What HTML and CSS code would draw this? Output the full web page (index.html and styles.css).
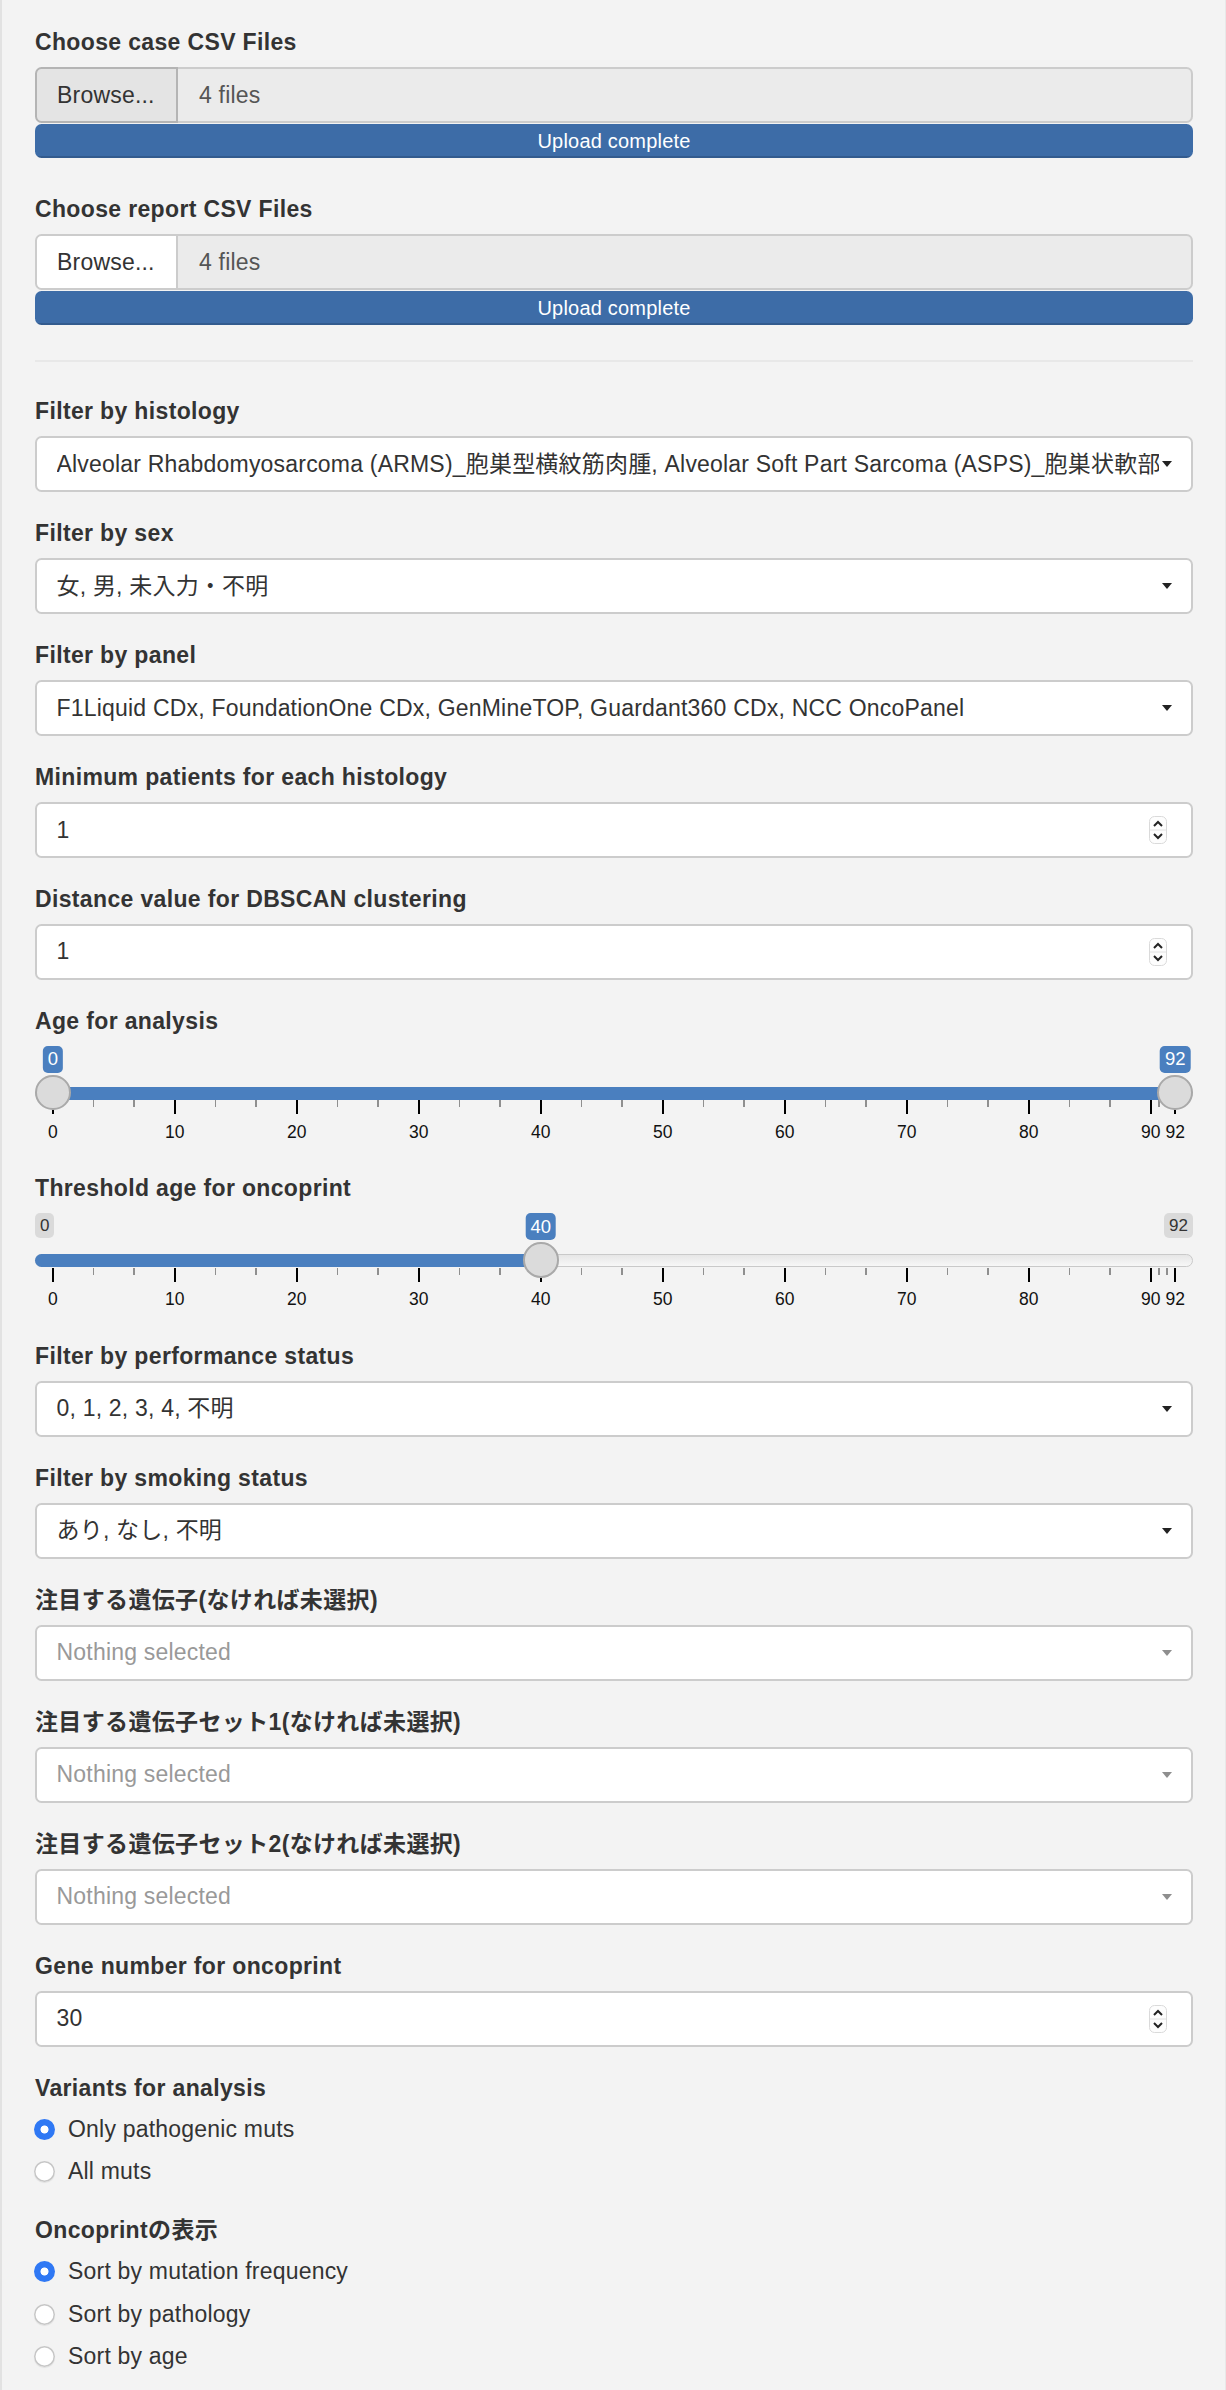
FILE: index.html
```html
<!DOCTYPE html>
<html lang="ja">
<head>
<meta charset="utf-8">
<title>Filters</title>
<link rel="stylesheet" href="styles.css">
</head>
<body>
<div class="well">

  <div class="group file-group">
    <label class="ctl-label">Choose case CSV Files</label>
    <div class="input-group">
      <span class="browse pressed">Browse...</span>
      <span class="file-name">4 files</span>
    </div>
    <div class="progress"><div class="progress-bar">Upload complete</div></div>
  </div>

  <div class="group file-group">
    <label class="ctl-label">Choose report CSV Files</label>
    <div class="input-group">
      <span class="browse">Browse...</span>
      <span class="file-name">4 files</span>
    </div>
    <div class="progress"><div class="progress-bar">Upload complete</div></div>
  </div>

  <hr class="divider">

  <div class="group">
    <label class="ctl-label">Filter by histology</label>
    <div class="select"><span class="sel-text">Alveolar Rhabdomyosarcoma (ARMS)_胞巣型横紋筋肉腫, Alveolar Soft Part Sarcoma (ASPS)_胞巣状軟部肉腫, Angiosarcoma_血管肉腫</span><span class="caret"></span></div>
  </div>

  <div class="group">
    <label class="ctl-label">Filter by sex</label>
    <div class="select"><span class="sel-text">女, 男, 未入力・不明</span><span class="caret"></span></div>
  </div>

  <div class="group">
    <label class="ctl-label">Filter by panel</label>
    <div class="select"><span class="sel-text">F1Liquid CDx, FoundationOne CDx, GenMineTOP, Guardant360 CDx, NCC OncoPanel</span><span class="caret"></span></div>
  </div>

  <div class="group">
    <label class="ctl-label">Minimum patients for each histology</label>
    <div class="number"><span class="num-text">1</span>
      <svg class="spin" width="18" height="28" viewBox="0 0 18 28"><rect x="0.5" y="0.5" width="17" height="27" rx="5" fill="#fdfdfd" stroke="#dadada"/><line x1="1" y1="14" x2="17" y2="14" stroke="#e2e2e2"/><path d="M5 10 L9 6 L13 10" fill="none" stroke="#222" stroke-width="2"/><path d="M5 18 L9 22 L13 18" fill="none" stroke="#222" stroke-width="2"/></svg>
    </div>
  </div>

  <div class="group">
    <label class="ctl-label">Distance value for DBSCAN clustering</label>
    <div class="number"><span class="num-text">1</span>
      <svg class="spin" width="18" height="28" viewBox="0 0 18 28"><rect x="0.5" y="0.5" width="17" height="27" rx="5" fill="#fdfdfd" stroke="#dadada"/><line x1="1" y1="14" x2="17" y2="14" stroke="#e2e2e2"/><path d="M5 10 L9 6 L13 10" fill="none" stroke="#222" stroke-width="2"/><path d="M5 18 L9 22 L13 18" fill="none" stroke="#222" stroke-width="2"/></svg>
    </div>
  </div>

  <div class="group slider-group">
    <label class="ctl-label">Age for analysis</label>
    <div class="irs">
      <span class="irs-line"></span>
      <span class="irs-bar" style="--from:0;--to:1"></span>
      <div class="irs-grid">
        <span class="tick" style="--p:0"></span>
        <span class="tick small" style="--p:0.036232"></span>
        <span class="tick small" style="--p:0.072464"></span>
        <span class="tick" style="--p:0.108696"></span>
        <span class="tick small" style="--p:0.144928"></span>
        <span class="tick small" style="--p:0.181159"></span>
        <span class="tick" style="--p:0.217391"></span>
        <span class="tick small" style="--p:0.253623"></span>
        <span class="tick small" style="--p:0.289855"></span>
        <span class="tick" style="--p:0.326087"></span>
        <span class="tick small" style="--p:0.362319"></span>
        <span class="tick small" style="--p:0.398551"></span>
        <span class="tick" style="--p:0.434783"></span>
        <span class="tick small" style="--p:0.471014"></span>
        <span class="tick small" style="--p:0.507246"></span>
        <span class="tick" style="--p:0.543478"></span>
        <span class="tick small" style="--p:0.579710"></span>
        <span class="tick small" style="--p:0.615942"></span>
        <span class="tick" style="--p:0.652174"></span>
        <span class="tick small" style="--p:0.688406"></span>
        <span class="tick small" style="--p:0.724638"></span>
        <span class="tick" style="--p:0.760870"></span>
        <span class="tick small" style="--p:0.797101"></span>
        <span class="tick small" style="--p:0.833333"></span>
        <span class="tick" style="--p:0.869565"></span>
        <span class="tick small" style="--p:0.905797"></span>
        <span class="tick small" style="--p:0.942029"></span>
        <span class="tick" style="--p:0.978261"></span>
        <span class="tick small" style="--p:0.985507"></span>
        <span class="tick small" style="--p:0.992754"></span>
        <span class="tick" style="--p:1"></span>
        <span class="grid-text" style="--p:0">0</span>
        <span class="grid-text" style="--p:0.108696">10</span>
        <span class="grid-text" style="--p:0.217391">20</span>
        <span class="grid-text" style="--p:0.326087">30</span>
        <span class="grid-text" style="--p:0.434783">40</span>
        <span class="grid-text" style="--p:0.543478">50</span>
        <span class="grid-text" style="--p:0.652174">60</span>
        <span class="grid-text" style="--p:0.760870">70</span>
        <span class="grid-text" style="--p:0.869565">80</span>
        <span class="grid-text" style="--p:0.978261">90</span>
        <span class="grid-text" style="--p:1">92</span>
      </div>
      <span class="irs-val" style="--p:0">0</span>
      <span class="irs-val" style="--p:1">92</span>
      <span class="irs-handle" style="--p:0"></span>
      <span class="irs-handle" style="--p:1"></span>
    </div>
  </div>

  <div class="group slider-group">
    <label class="ctl-label">Threshold age for oncoprint</label>
    <div class="irs">
      <span class="irs-line"></span>
      <span class="irs-bar single" style="--to:0.434783"></span>
      <div class="irs-grid">
        <span class="tick" style="--p:0"></span>
        <span class="tick small" style="--p:0.036232"></span>
        <span class="tick small" style="--p:0.072464"></span>
        <span class="tick" style="--p:0.108696"></span>
        <span class="tick small" style="--p:0.144928"></span>
        <span class="tick small" style="--p:0.181159"></span>
        <span class="tick" style="--p:0.217391"></span>
        <span class="tick small" style="--p:0.253623"></span>
        <span class="tick small" style="--p:0.289855"></span>
        <span class="tick" style="--p:0.326087"></span>
        <span class="tick small" style="--p:0.362319"></span>
        <span class="tick small" style="--p:0.398551"></span>
        <span class="tick" style="--p:0.434783"></span>
        <span class="tick small" style="--p:0.471014"></span>
        <span class="tick small" style="--p:0.507246"></span>
        <span class="tick" style="--p:0.543478"></span>
        <span class="tick small" style="--p:0.579710"></span>
        <span class="tick small" style="--p:0.615942"></span>
        <span class="tick" style="--p:0.652174"></span>
        <span class="tick small" style="--p:0.688406"></span>
        <span class="tick small" style="--p:0.724638"></span>
        <span class="tick" style="--p:0.760870"></span>
        <span class="tick small" style="--p:0.797101"></span>
        <span class="tick small" style="--p:0.833333"></span>
        <span class="tick" style="--p:0.869565"></span>
        <span class="tick small" style="--p:0.905797"></span>
        <span class="tick small" style="--p:0.942029"></span>
        <span class="tick" style="--p:0.978261"></span>
        <span class="tick small" style="--p:0.985507"></span>
        <span class="tick small" style="--p:0.992754"></span>
        <span class="tick" style="--p:1"></span>
        <span class="grid-text" style="--p:0">0</span>
        <span class="grid-text" style="--p:0.108696">10</span>
        <span class="grid-text" style="--p:0.217391">20</span>
        <span class="grid-text" style="--p:0.326087">30</span>
        <span class="grid-text" style="--p:0.434783">40</span>
        <span class="grid-text" style="--p:0.543478">50</span>
        <span class="grid-text" style="--p:0.652174">60</span>
        <span class="grid-text" style="--p:0.760870">70</span>
        <span class="grid-text" style="--p:0.869565">80</span>
        <span class="grid-text" style="--p:0.978261">90</span>
        <span class="grid-text" style="--p:1">92</span>
      </div>
      <span class="irs-min">0</span>
      <span class="irs-max">92</span>
      <span class="irs-val" style="--p:0.434783">40</span>
      <span class="irs-handle" style="--p:0.434783"></span>
    </div>
  </div>

  <div class="group">
    <label class="ctl-label">Filter by performance status</label>
    <div class="select"><span class="sel-text">0, 1, 2, 3, 4, 不明</span><span class="caret"></span></div>
  </div>

  <div class="group">
    <label class="ctl-label">Filter by smoking status</label>
    <div class="select"><span class="sel-text">あり, なし, 不明</span><span class="caret"></span></div>
  </div>

  <div class="group">
    <label class="ctl-label">注目する遺伝子(なければ未選択)</label>
    <div class="select placeholder"><span class="sel-text">Nothing selected</span><span class="caret"></span></div>
  </div>

  <div class="group">
    <label class="ctl-label">注目する遺伝子セット1(なければ未選択)</label>
    <div class="select placeholder"><span class="sel-text">Nothing selected</span><span class="caret"></span></div>
  </div>

  <div class="group">
    <label class="ctl-label">注目する遺伝子セット2(なければ未選択)</label>
    <div class="select placeholder"><span class="sel-text">Nothing selected</span><span class="caret"></span></div>
  </div>

  <div class="group">
    <label class="ctl-label">Gene number for oncoprint</label>
    <div class="number"><span class="num-text">30</span>
      <svg class="spin" width="18" height="28" viewBox="0 0 18 28"><rect x="0.5" y="0.5" width="17" height="27" rx="5" fill="#fdfdfd" stroke="#dadada"/><line x1="1" y1="14" x2="17" y2="14" stroke="#e2e2e2"/><path d="M5 10 L9 6 L13 10" fill="none" stroke="#222" stroke-width="2"/><path d="M5 18 L9 22 L13 18" fill="none" stroke="#222" stroke-width="2"/></svg>
    </div>
  </div>

  <div class="group radio-group">
    <label class="ctl-label">Variants for analysis</label>
    <div class="radio checked"><span class="dot"></span><span>Only pathogenic muts</span></div>
    <div class="radio"><span class="dot"></span><span>All muts</span></div>
  </div>

  <div class="group radio-group">
    <label class="ctl-label">Oncoprintの表示</label>
    <div class="radio checked"><span class="dot"></span><span>Sort by mutation frequency</span></div>
    <div class="radio"><span class="dot"></span><span>Sort by pathology</span></div>
    <div class="radio"><span class="dot"></span><span>Sort by age</span></div>
  </div>

</div>
</body>
</html>
```

FILE: styles.css
```css
* { box-sizing: border-box; }

html, body {
  margin: 0;
  padding: 0;
}

body {
  background: #f3f3f3;
  font-family: "Liberation Sans", Arial, "Noto Sans CJK JP", sans-serif;
  font-size: 23px;
  line-height: 32.8px;
  letter-spacing: 0.2px;
  color: #333;
}

.well {
  min-height: 2390px;
  background: #f3f3f3;
  border-left: 2px solid #e2e2e2;
  border-right: 1px solid #e8e8e8;
  padding: 26px 32px 1px 33px;
}

.ctl-label {
  display: block;
  font-weight: bold;
  letter-spacing: 0.35px;
  height: 32.8px;
  margin-bottom: 8.2px;
  white-space: nowrap;
}

.group {
  margin-bottom: 25px;
}

/* file input */
.file-group {
  margin-bottom: 35px;
}

.input-group {
  display: flex;
  height: 56px;
}

.browse {
  width: 143px;
  display: flex;
  align-items: center;
  padding-left: 20px;
  background: #fff;
  border: 2px solid #cccccc;
  border-radius: 6.5px 0 0 6.5px;
  color: #333;
}

.browse.pressed {
  background: #e4e4e4;
  border-color: #b4b4b4;
}

.file-name {
  flex: 1;
  display: flex;
  align-items: center;
  padding-left: 21px;
  background: #ebebeb;
  border: 2px solid #cccccc;
  border-left: 0;
  border-radius: 0 6.5px 6.5px 0;
  color: #555;
}

.progress {
  height: 34px;
  margin-top: 1px;
  border-radius: 6.5px;
  overflow: hidden;
  background: #f0f0f0;
}

.progress-bar {
  height: 100%;
  background: #3d6ca7;
  box-shadow: inset 0 -2px 0 rgba(0, 0, 0, 0.15);
  color: #fff;
  font-size: 20px;
  line-height: 34px;
  letter-spacing: 0.2px;
  text-align: center;
}

.divider {
  border: 0;
  border-top: 2px solid #e8e8e8;
  margin: 0 0 33px;
  height: 0;
}

/* selects */
.select,
.number {
  height: 56px;
  display: flex;
  align-items: center;
  padding: 0 19.5px;
  background: #fff;
  border: 2px solid #cccccc;
  border-radius: 6.5px;
  color: #333;
}

.sel-text {
  flex: 1;
  min-width: 0;
  overflow: hidden;
  white-space: nowrap;
  margin-right: 3px;
}

.caret {
  flex: none;
  width: 0;
  height: 0;
  border-top: 6px solid #222;
  border-left: 5px solid transparent;
  border-right: 5px solid transparent;
}

.select.placeholder {
  color: #999;
}

.select.placeholder .caret {
  border-top-color: #8e8e8e;
}

.num-text {
  flex: 1;
}

.spin {
  flex: none;
  margin-right: 4.5px;
}

/* range slider */
.irs {
  position: relative;
  height: 101.5px;
  letter-spacing: 0;
}

.irs-line {
  position: absolute;
  left: 0;
  right: 0;
  top: 41px;
  height: 13px;
  border: 1.5px solid #c9c9c9;
  border-radius: 13px;
  background: linear-gradient(to bottom, #dedede -50%, #ffffff 150%);
}

.irs-bar {
  position: absolute;
  top: 41px;
  height: 13px;
  background: #4a7fbf;
  left: calc(17.8px + (100% - 35.6px) * var(--from));
  width: calc((100% - 35.6px) * (var(--to) - var(--from)));
}

.irs-bar.single {
  left: 0;
  width: calc(17.8px + (100% - 35.6px) * var(--to));
  border-radius: 13px 0 0 13px;
}

.irs-grid {
  position: absolute;
  left: 0;
  right: 0;
  top: 0;
  bottom: 0;
}

.tick {
  position: absolute;
  top: 54.5px;
  width: 2px;
  height: 14px;
  margin-left: -1px;
  background: #000;
  left: calc(17.8px + (100% - 35.6px) * var(--p));
}

.tick.small {
  height: 6.8px;
  width: 1.6px;
  margin-left: -0.8px;
  background: #8f8f8f;
}

.grid-text {
  position: absolute;
  top: 76px;
  font-size: 17.5px;
  line-height: 20px;
  color: #111;
  left: calc(17.8px + (100% - 35.6px) * var(--p));
  transform: translateX(-50%);
  white-space: nowrap;
}

.irs-val {
  position: absolute;
  top: 0;
  left: calc(17.8px + (100% - 35.6px) * var(--p));
  transform: translateX(-50%);
  padding: 1.5px 5px;
  background: #4a7fbf;
  color: #fff;
  font-size: 18.5px;
  line-height: 24px;
  border-radius: 5px;
  white-space: nowrap;
}

.irs-min,
.irs-max {
  position: absolute;
  top: 0;
  padding: 1.5px 5px;
  background: rgba(0, 0, 0, 0.1);
  color: #333;
  font-size: 17px;
  line-height: 22px;
  border-radius: 5px;
}

.irs-min { left: 0; }
.irs-max { right: 0; }

.irs-handle {
  position: absolute;
  top: 28.7px;
  width: 35.6px;
  height: 35.6px;
  left: calc((100% - 35.6px) * var(--p));
  border-radius: 50%;
  background: #dbdbdb;
  border: 2px solid #a9a9a9;
}

/* radios */
.radio-group {
  margin-bottom: 26.4px;
}

.radio {
  display: flex;
  align-items: center;
  height: 32.8px;
  margin-bottom: 9.7px;
  color: #333;
}

.radio:last-child {
  margin-bottom: 0;
}

.dot {
  flex: none;
  width: 21px;
  height: 21px;
  margin-left: -1px;
  margin-right: 13px;
  border-radius: 50%;
  background: #fff;
  box-shadow: inset 0 0 0 1.5px #c6c6c6, 0 1px 1px rgba(0, 0, 0, 0.08);
}

.radio.checked .dot {
  background: radial-gradient(circle, #ffffff 0 3.6px, #2f78f4 4.4px);
  box-shadow: none;
}
```
